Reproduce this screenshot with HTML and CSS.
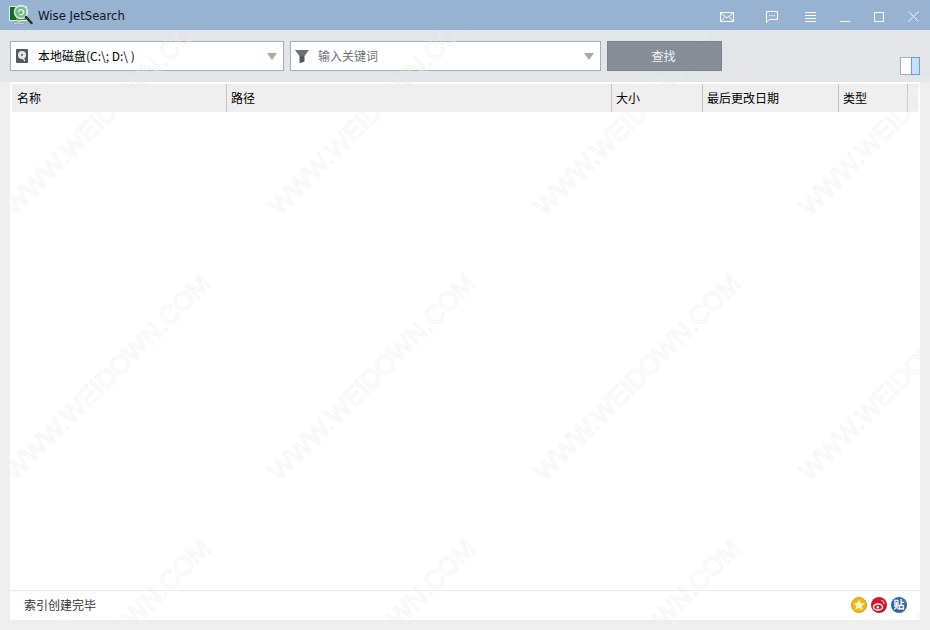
FILE: index.html
```html
<!DOCTYPE html>
<html>
  <head>
    <meta charset="utf-8" />
    <title>Wise JetSearch</title>
    <link rel="stylesheet" href="styles.css">
  </head>
  <body>
    <main class="app">
      <header class="titlebar">
        <svg class="logo" width="24" height="24" viewBox="0 0 24 24">
          <rect x=".5" y="3.500" width="17" height="14" fill="#2aa04a" stroke="#e4ece4"/>
          <rect x="1" y="4" width="6" height="13" fill="#0f6b2c"/>
          <path d="M5 20h10v1.500H5zM8 18h4v2H8z" fill="#eef2ee" stroke="#7d8790" stroke-width=".5"/>
          <circle cx="12" cy="9" r="6.500" fill="#a8d8ae" fill-opacity=".55" stroke="#dfe6e4" stroke-width="1.500"/>
          <path d="M9.500 9a2.600 2.600 0 1 1 1 2.200" fill="none" stroke="#f2fff2" stroke-width="1.300"/>
          <path d="M17 14l5.500 6" stroke="#2b2b2b" stroke-width="2.400" stroke-linecap="round"/>
        </svg>
        <span class="app-name">Wise JetSearch</span>
        <div class="win-icons">
          <svg class="icon-mail" width="14" height="10" viewBox="0 0 14 10"><path d="M.5.500h13v9H.5zM.5.500 7 6l6.500-5.500M.5 9.500 5 4.800M13.500 9.500 9 4.800" fill="none" stroke="#fff"/></svg>
          <svg class="icon-chat" width="12" height="12" viewBox="0 0 12 12"><path d="M.5.500h11v8H3.500L.5 11.500z" fill="none" stroke="#fff"/><path d="M3 4h1.200v1.200H3zM5.400 4h1.200v1.200H5.400zM7.800 4H9v1.200H7.800z" fill="#fff"/></svg>
          <svg width="11" height="10" viewBox="0 0 11 10"><path d="M0 .5h11M0 3.500h11M0 6.500h11M0 9.500h11" stroke="#fff"/></svg>
          <svg width="10" height="10" viewBox="0 0 10 10"><path d="M0 9.500h10" stroke="#fff"/></svg>
          <svg width="10" height="10" viewBox="0 0 10 10"><path d="M.5.500h9v9h-9z" fill="none" stroke="#fff"/></svg>
          <svg width="11" height="11" viewBox="0 0 11 11"><path d="M.5.500l10 10M10.500.500l-10 10" stroke="#fff"/></svg>
        </div>
      </header>

      <section class="toolbar">
        <div class="combo combo-drive">
          <svg width="12" height="14" viewBox="0 0 12 14"><rect width="12" height="14" rx="1" fill="#55585c"/><circle cx="6" cy="6" r="4" fill="#e6e8ea"/><circle cx="6" cy="6" r="1" fill="#55585c"/><path d="M6 8l3 4" stroke="#e6e8ea" stroke-width="1.300"/></svg>
          <span class="combo-text">本地磁盘(C:\; D:\ )</span>
          <i class="arrow"></i>
        </div>
        <div class="combo combo-key">
          <svg width="14" height="13" viewBox="0 0 14 13"><path d="M0 0h14L9.500 6H4.500z" fill="#6a6d72"/><path d="M4.500 6h5v5.500L5.500 13H4.500z" fill="#55585c"/></svg>
          <span class="combo-text hint">输入关键词</span>
          <i class="arrow"></i>
        </div>
        <button class="find">查找</button>
        <div class="split-toggle"><span></span><span></span></div>
      </section>

      <section class="results">
        <div class="columns">
          <div class="col col-name">名称</div>
          <div class="col col-path">路径</div>
          <div class="col col-size">大小</div>
          <div class="col col-date">最后更改日期</div>
          <div class="col col-type">类型</div>
          <div class="col col-rest"></div>
        </div>
        <div class="rows"></div>
        <footer class="status">
          <span>索引创建完毕</span>
          <div class="social">
            <svg width="16" height="16" viewBox="0 0 16 16"><circle cx="8" cy="8" r="7.500" fill="#f0bb14" stroke="#d59a06"/><path d="M8 2.500l1.700 3.600 3.900.5-2.900 2.600.8 3.900L8 10.700l-3.500 1.900.8-3.900L2.400 6.600l3.900-.5z" fill="#fdf3c8"/></svg>
            <svg width="16" height="16" viewBox="0 0 16 16"><circle cx="8" cy="8" r="8" fill="#d3152e"/><ellipse cx="7" cy="10" rx="4.500" ry="3" fill="none" stroke="#fff" stroke-width="1.300"/><circle cx="6.800" cy="10.200" r="1.200" fill="#fff"/><path d="M10 3.500a3 3 0 0 1 3 3.500" fill="none" stroke="#f6b9c0" stroke-width="1.200"/></svg>
            <svg width="16" height="16" viewBox="0 0 16 16"><circle cx="8" cy="8" r="8" fill="#2f66a3"/><text class="tieba" x="8" y="12">贴</text></svg>
          </div>
        </footer>
      </section>

      <div class="watermark" aria-hidden="true">
        <span>WWW.WEIDOWN.COM</span><span>WWW.WEIDOWN.COM</span><span>WWW.WEIDOWN.COM</span><span>WWW.WEIDOWN.COM</span>
        <span>WWW.WEIDOWN.COM</span><span>WWW.WEIDOWN.COM</span><span>WWW.WEIDOWN.COM</span><span>WWW.WEIDOWN.COM</span>
        <span>WWW.WEIDOWN.COM</span><span>WWW.WEIDOWN.COM</span><span>WWW.WEIDOWN.COM</span><span>WWW.WEIDOWN.COM</span>
      </div>
    </main>
  </body>
</html>
```

FILE: styles.css
```css
html, body {
  height: 100%;
  margin: 0;
  padding: 0;
}
body {
  font-size: 12px;
  font-family: "Noto Sans CJK SC", "Noto Sans", sans-serif;
  color: #000;
  background-color: #efefef;
  overflow: hidden;
}
.app {
  position: relative;
  width: 930px;
  height: 630px;
  display: flex;
  flex-flow: column;
  overflow: hidden;
}

.titlebar {
  position: relative;
  z-index: 1;
  height: 30px;
  flex: none;
  display: flex;
  align-items: center;
  padding: 0 11px 0 9px;
  background-color: #97b3d1;
}
.logo {
  margin-right: 5px;
}
.app-name {
  padding-top: 2px;
  font-family: "DejaVu Sans", sans-serif;
  font-size: 11.7px;
  color: #10141c;
}
.win-icons {
  margin-left: auto;
  padding-top: 3px;
  display: flex;
  align-items: center;
  gap: 24px;
}
.icon-mail {
  margin-right: 8px;
}
.icon-chat {
  margin-right: 3px;
}

.toolbar {
  height: 52px;
  flex: none;
  display: flex;
  align-items: flex-start;
  padding: 11px 10px 0;
  box-sizing: border-box;
  background-color: #e3e5e9;
}
.combo {
  height: 30px;
  box-sizing: border-box;
  display: flex;
  align-items: center;
  border: 1px solid #a9adb6;
  background-color: #fff;
}
.combo-drive {
  width: 274px;
  padding: 0 5px;
  margin-right: 6px;
}
.combo-key {
  width: 311px;
  padding: 0 5px 0 4px;
  margin-right: 6px;
}
.combo-text {
  flex: 1;
  margin-left: 10px;
  padding-bottom: 2px;
}
.combo-key .combo-text {
  margin-left: 9px;
}
.hint {
  color: #6c6f75;
}
.arrow {
  width: 0;
  height: 0;
  border-left: 5px solid transparent;
  border-right: 5px solid transparent;
  border-top: 7px solid #a6abb3;
  margin-right: 1px;
}
.find {
  position: relative;
  z-index: 1;
  width: 115px;
  height: 30px;
  border: 1px solid #7a8491;
  background-color: #878e98;
  color: #f2f3f5;
  font-family: inherit;
  font-size: 12px;
  padding: 0 2px 2px 0;
}
.split-toggle {
  margin: 16px 0 0 auto;
  display: flex;
  width: 20px;
  height: 18px;
}
.split-toggle span {
  flex: 1;
  box-sizing: border-box;
  border: 1px solid #a9adb6;
  border-right: 0;
  background-color: #fff;
}
.split-toggle span + span {
  flex: none;
  width: 9px;
  border: 1px solid #5f9fe3;
  background-color: #c9dff6;
}

.results {
  flex: 1;
  margin: 0 10px 10px;
  display: flex;
  flex-flow: column;
  background-color: #fff;
}
.columns {
  height: 28px;
  margin: 2px 2px 0;
  flex: none;
  display: flex;
  background-color: #efefef;
}
.col {
  box-sizing: border-box;
  line-height: 28px;
  padding-left: 5px;
  border-right: 1px solid #c4c4c4;
}
.col-name { width: 215px; }
.col-path { width: 385px; padding-left: 4px; }
.col-size { width: 91px; padding-left: 4px; }
.col-date { width: 136px; padding-left: 4px; }
.col-type { width: 69px; padding-left: 4px; }
.col-rest { flex: 1; border-right: 0; }
.rows {
  flex: 1;
}
.status {
  height: 30px;
  flex: none;
  display: flex;
  align-items: center;
  padding: 0 13px 2px 14px;
  border-top: 1px solid #ececec;
  box-sizing: border-box;
  color: #333;
}
.social {
  margin-left: auto;
  display: flex;
  gap: 4px;
}
.tieba {
  fill: #fff;
  font-size: 11px;
  font-weight: 700;
  text-anchor: middle;
}

.watermark {
  position: absolute;
  top: -20px;
  left: -25px;
  display: grid;
  grid-template-columns: repeat(4, 265px);
  grid-auto-rows: 265px;
  pointer-events: none;
}
.watermark span {
  justify-self: center;
  align-self: center;
  transform: rotate(-45deg);
  font-family: "Liberation Sans", sans-serif;
  font-size: 26px;
  color: transparent;
  -webkit-text-stroke: 1px rgba(237, 237, 237, 0.6);
  white-space: nowrap;
}
```
